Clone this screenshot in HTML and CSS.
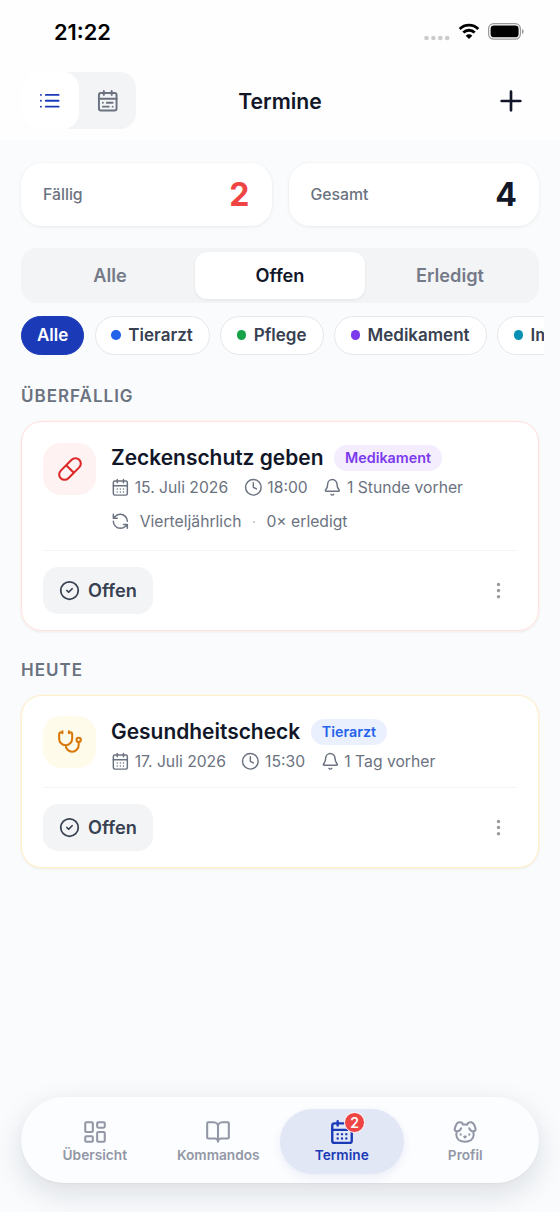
FILE: index.html
```html
<!DOCTYPE html>
<html lang="de">
<head>
<meta charset="utf-8">
<title>Termine</title>
<link rel="stylesheet" href="styles.css">
</head>
<body>
<svg class="sprite" aria-hidden="true">
  <symbol id="i-list" viewBox="0 0 24 24"><path d="M8 6h13M8 12h13M8 18h13M3 6h.01M3 12h.01M3 18h.01"/></symbol>
  <symbol id="i-range" viewBox="0 0 24 24"><rect x="3" y="4" width="18" height="18" rx="2"/><path d="M16 2v4M3 10h18M8 2v4M17 14h-6M13 18H7M7 14h.01M17 18h.01"/></symbol>
  <symbol id="i-cal" viewBox="0 0 24 24"><rect x="3" y="4" width="18" height="18" rx="2"/><path d="M16 2v4M3 10h18M8 2v4M8 14h.01M12 14h.01M16 14h.01M8 18h.01M12 18h.01M16 18h.01"/></symbol>
  <symbol id="i-clock" viewBox="0 0 24 24"><circle cx="12" cy="12" r="10"/><path d="M12 6v6l4 2"/></symbol>
  <symbol id="i-bell" viewBox="0 0 24 24"><path d="M10.268 21a2 2 0 0 0 3.464 0M3.262 15.326A1 1 0 0 0 4 17h16a1 1 0 0 0 .74-1.673C19.41 13.956 18 12.499 18 8A6 6 0 0 0 6 8c0 4.499-1.411 5.956-2.738 7.326"/></symbol>
  <symbol id="i-check" viewBox="0 0 24 24"><circle cx="12" cy="12" r="10"/><path d="m9 12 2 2 4-4"/></symbol>
  <symbol id="i-more" viewBox="0 0 24 24"><circle cx="12" cy="12" r="1"/><circle cx="12" cy="5" r="1"/><circle cx="12" cy="19" r="1"/></symbol>
</svg>

<header class="top">
  <div class="status">
    <span class="time">21:22</span>
    <span class="indicators">
      <svg class="signal" viewBox="0 0 26 6"><circle cx="2.5" cy="3" r="2.3"/><circle cx="9.4" cy="3" r="2.3"/><circle cx="16.3" cy="3" r="2.3"/><circle cx="23.2" cy="3" r="2.3"/></svg>
      <svg class="wifi" viewBox="0 0 22 16"><path class="arc" d="M1.7 5.9a13.2 13.2 0 0 1 18.6 0M5.3 9.6a8.1 8.1 0 0 1 11.4 0"/><path d="M11 16 7.7 12.7a4.7 4.7 0 0 1 6.6 0z"/></svg>
      <svg class="battery" viewBox="0 0 36 17"><rect class="shell" x=".6" y=".6" width="31.8" height="15.6" rx="5"/><rect x="2.6" y="2.5" width="28" height="11.8" rx="3.4"/><path class="nub" d="M34 6v5c1-.4 1.7-1.3 1.7-2.5S35 6.400 34 6z"/></svg>
    </span>
  </div>
  <div class="toolbar">
    <div class="views">
      <button class="view is-on"><svg class="icon"><use href="#i-list"/></svg></button>
      <button class="view"><svg class="icon"><use href="#i-range"/></svg></button>
    </div>
    <h1>Termine</h1>
    <button class="add"><svg class="icon" viewBox="0 0 24 24"><path d="M5 12h14M12 5v14"/></svg></button>
  </div>
</header>

<main>
  <section class="stats">
    <div class="stat"><span>Fällig</span><b class="due">2</b></div>
    <div class="stat"><span>Gesamt</span><b>4</b></div>
  </section>

  <div class="segments">
    <button>Alle</button><button class="is-on">Offen</button><button>Erledigt</button>
  </div>

  <div class="chips">
    <button class="chip is-on">Alle</button>
    <button class="chip vet"><i></i>Tierarzt</button>
    <button class="chip care"><i></i>Pflege</button>
    <button class="chip med"><i></i>Medikament</button>
    <button class="chip vac"><i></i>Impfung</button>
  </div>

  <h2>ÜBERFÄLLIG</h2>
  <article class="card overdue">
    <div class="info">
      <div class="tile"><svg class="icon" viewBox="0 0 24 24"><path d="m10.500 20.500 10-10a4.950 4.950 0 1 0-7-7l-10 10a4.950 4.950 0 1 0 7 7ZM8.500 8.500l7 7"/></svg></div>
      <div class="body">
        <div class="title"><h3>Zeckenschutz geben</h3><span class="tag med">Medikament</span></div>
        <div class="meta">
          <span><svg class="icon"><use href="#i-cal"/></svg>15. Juli 2026</span>
          <span><svg class="icon"><use href="#i-clock"/></svg>18:00</span>
          <span><svg class="icon"><use href="#i-bell"/></svg>1 Stunde vorher</span>
        </div>
        <div class="repeat">
          <svg class="icon" viewBox="0 0 24 24"><path d="M21 12a9 9 0 0 0-9-9 9.750 9.750 0 0 0-6.740 2.740L3 8M3 3v5h5M3 12a9 9 0 0 0 9 9 9.750 9.750 0 0 0 6.740-2.740L21 16M16 16h5v5"/></svg>
          <span>Vierteljährlich</span><span class="sep">·</span><span>0× erledigt</span>
        </div>
      </div>
    </div>
    <div class="actions">
      <button class="state"><svg class="icon"><use href="#i-check"/></svg>Offen</button>
      <button class="more"><svg class="icon"><use href="#i-more"/></svg></button>
    </div>
  </article>

  <h2 class="next">HEUTE</h2>
  <article class="card today">
    <div class="info">
      <div class="tile"><svg class="icon" viewBox="0 0 24 24"><path d="M11 2v2M5 2v2M5 3H4a2 2 0 0 0-2 2v4a6 6 0 0 0 12 0V5a2 2 0 0 0-2-2h-1M8 15a6 6 0 0 0 12 0v-3"/><circle cx="20" cy="10" r="2"/></svg></div>
      <div class="body">
        <div class="title"><h3>Gesundheitscheck</h3><span class="tag vet">Tierarzt</span></div>
        <div class="meta">
          <span><svg class="icon"><use href="#i-cal"/></svg>17. Juli 2026</span>
          <span><svg class="icon"><use href="#i-clock"/></svg>15:30</span>
          <span><svg class="icon"><use href="#i-bell"/></svg>1 Tag vorher</span>
        </div>
      </div>
    </div>
    <div class="actions">
      <button class="state"><svg class="icon"><use href="#i-check"/></svg>Offen</button>
      <button class="more"><svg class="icon"><use href="#i-more"/></svg></button>
    </div>
  </article>
</main>

<nav class="tabs">
  <a class="tab"><svg class="icon" viewBox="0 0 24 24"><rect x="3" y="3" width="7" height="9" rx="1"/><rect x="14" y="3" width="7" height="5" rx="1"/><rect x="14" y="12" width="7" height="9" rx="1"/><rect x="3" y="16" width="7" height="5" rx="1"/></svg>Übersicht</a>
  <a class="tab"><svg class="icon" viewBox="0 0 24 24"><path d="M12 7v14M3 18a1 1 0 0 1-1-1V4a1 1 0 0 1 1-1h5a4 4 0 0 1 4 4 4 4 0 0 1 4-4h5a1 1 0 0 1 1 1v13a1 1 0 0 1-1 1h-6a3 3 0 0 0-3 3 3 3 0 0 0-3-3z"/></svg>Kommandos</a>
  <a class="tab is-on"><svg class="icon"><use href="#i-cal"/></svg>Termine<span class="count">2</span></a>
  <a class="tab"><svg class="icon" viewBox="0 0 24 24"><path d="M10 5.172C10 3.782 8.423 2.679 6.500 3c-2.823.47-4.113 6.006-4 7 .08.703 1.725 1.722 3.656 1 1.261-.472 1.960-1.450 2.344-2.500M14.267 5.172c0-1.390 1.577-2.493 3.500-2.172 2.823.47 4.113 6.006 4 7-.08.703-1.725 1.722-3.656 1-1.261-.472-1.855-1.450-2.239-2.500M8 14v.5M16 14v.5M11.250 16.250h1.500L12 17l-.75-.75ZM4.420 11.247A13.152 13.152 0 0 0 4 14.556C4 18.728 7.582 21 12 21s8-2.272 8-6.444c0-1.061-.162-2.200-.493-3.309m-9.243-6.082A8.801 8.801 0 0 1 12 5c.78 0 1.500.108 2.161.306"/></svg>Profil</a>
</nav>
</body>
</html>
```

FILE: styles.css
```css
* { box-sizing: border-box; }

body {
  margin: 0;
  height: 1212px;
  display: flex;
  flex-direction: column;
  overflow: hidden;
  background: #f9fbfd;
  color: #111728;
  font-family: Inter, "Liberation Sans", sans-serif;
}

h1, h2, h3 { margin: 0; font-weight: 600; white-space: nowrap; }

button {
  margin: 0;
  padding: 0;
  border: 0;
  background: none;
  font: inherit;
  color: inherit;
}

.sprite { display: none; }

.icon {
  display: block;
  flex: none;
  fill: none;
  stroke: currentColor;
  stroke-width: 2;
  stroke-linecap: round;
  stroke-linejoin: round;
}

/* Header */
.top { flex: none; height: 140px; background: #fefefe; }

.status {
  height: 72px;
  padding: 18px 36px 0 54px;
  display: flex;
  justify-content: space-between;
}

.time { font-size: 21.800px; line-height: 28px; font-weight: 600; color: #000; }

.indicators { display: flex; gap: 8px; padding-top: 5px; }
.signal { width: 26px; height: 6px; margin-top: 11.500px; fill: #ccc; }
.wifi { width: 22px; height: 16px; }
.wifi .arc { fill: none; stroke: #000; stroke-width: 2.800; }
.battery { width: 36px; height: 17px; }
.battery .shell { fill: none; stroke: #999; stroke-width: 1.200; }
.battery .nub { fill: #999; }

.toolbar {
  display: grid;
  grid-template-columns: 1fr auto 1fr;
  align-items: center;
  height: 57px;
  padding: 0 21px;
}

.views {
  display: flex;
  width: 115px;
  height: 57px;
  border-radius: 16px;
  background: #f3f4f6;
}

.view {
  flex: 1;
  display: grid;
  place-items: center;
  border-radius: 16px;
  color: #6b7280;
}

.view.is-on { background: #fff; color: #1a3ab8; }
.view .icon { width: 23.500px; height: 23.500px; }

h1 { font-size: 21.200px; line-height: 28px; }

.add { justify-self: end; margin-right: 7px; padding: 5px; }
.add .icon { width: 32px; height: 32px; }

/* Counters and filters */
main { flex: 1; padding: 23px 21px 0; }

.stats { display: grid; grid-template-columns: 1fr 1fr; gap: 17px; }

.stat {
  height: 63px;
  padding: 0 22px;
  display: flex;
  align-items: center;
  justify-content: space-between;
  border-radius: 21px;
  background: #fff;
  box-shadow: 0 0 0 1px rgba(0, 0, 0, .012), 0 1px 4px rgba(0, 0, 0, .06);
}

.stat span { padding-bottom: 1px; font-size: 15.800px; font-weight: 500; color: #6b7280; }
.stat b { font-size: 32px; font-weight: 700; }
.stat .due { color: #ef4444; }

.segments {
  display: grid;
  grid-template-columns: 1fr 1fr 1fr;
  height: 55px;
  margin-top: 22px;
  padding: 4px;
  border-radius: 16px;
  background: #f3f4f6;
}

.segments button { padding-bottom: 1px; font-size: 18.200px; font-weight: 600; color: #757a88; border-radius: 12px; }
.segments .is-on { background: #fff; color: #111728; box-shadow: 0 1px 3px rgba(0, 0, 0, .07); }

.chips {
  display: flex;
  gap: 10.500px;
  width: 523px;
  margin-top: 13px;
  overflow: hidden;
}

.chip {
  flex: none;
  display: flex;
  align-items: center;
  height: 39px;
  padding: 0 16px 1px 15.500px;
  border: 1px solid #e5e7eb;
  border-radius: 20px;
  background: #fff;
  color: #374151;
  font-size: 17px;
  font-weight: 600;
}

.chip.is-on { padding: 0 15px 1px; background: #1a3ab8; border-color: #1a3ab8; color: #fff; }
.chip i { width: 9.500px; height: 9.500px; margin-right: 7.500px; border-radius: 50%; }
.vet i { background: #2563eb; }
.care i { background: #16a34a; }
.med i { background: #7c3aed; }
.vac i { background: #0891b2; }

h2 {
  margin-top: 29px;
  font-size: 17px;
  line-height: 24px;
  letter-spacing: 1px;
  color: #6b7280;
}

h2.next { margin-top: 27px; }

/* Appointment cards */
.card {
  margin-top: 13px;
  padding: 21px 21px 16px;
  border: 1px solid;
  border-radius: 21px;
  background: #fff;
  box-shadow: 0 0 0 .5px #fff3ea, 0 1px 3px rgba(0, 0, 0, .08);
}

.overdue { border-color: #fee2e2; }
.today { border-color: #fef0c7; }

.info { display: flex; gap: 15px; }

.tile {
  flex: none;
  width: 53px;
  height: 52px;
  display: grid;
  place-items: center;
  border-radius: 18px;
}

.tile .icon { width: 26px; height: 26px; stroke-width: 1.900; }
.overdue .tile { background: #fef2f2; color: #dc2626; }
.today .tile { margin-top: -1px; background: #fffbeb; color: #d97706; }

.title { display: flex; align-items: center; gap: 11px; height: 30px; }
h3 { font-size: 20.950px; line-height: 30px; }

.tag {
  height: 26px;
  padding: 0 10.500px;
  border-radius: 13px;
  font-size: 14.350px;
  line-height: 26px;
  font-weight: 600;
}

.tag.med { background: #f3edfe; color: #7c3aed; }
.tag.vet { background: #eaf0fe; color: #2563eb; }

.meta { display: flex; gap: 15.500px; height: 28px; }
.meta span { display: flex; align-items: center; gap: 5px; white-space: nowrap; }
.meta, .repeat { font-size: 15.700px; color: #6b7280; }
.meta .icon, .repeat .icon { width: 18.700px; height: 18.700px; stroke-width: 1.900; }

.repeat { display: flex; align-items: center; height: 40px; }
.repeat .icon { margin-right: 10px; }
.sep { width: 25px; text-align: center; color: #c3c8d0; }

.actions {
  display: flex;
  align-items: center;
  justify-content: space-between;
  padding-top: 16px;
  border-top: 1px solid #f1f3f5;
}

.overdue .actions { margin-top: 9px; }
.today .actions { margin-top: 12px; }

.state {
  display: flex;
  align-items: center;
  gap: 8px;
  height: 47px;
  padding: 0 16px 1px;
  border-radius: 15px;
  background: #f3f4f6;
  color: #374151;
  font-size: 18.200px;
  font-weight: 600;
}

.state .icon { width: 21px; height: 21px; }
.more { padding: 8px; color: #9b9b9b; }
.more .icon { width: 21px; height: 21px; }

/* Bottom navigation */
.tabs {
  flex: none;
  display: grid;
  grid-template-columns: repeat(4, 1fr);
  height: 86px;
  margin: 0 21px 29px;
  padding: 12px;
  border-radius: 43px;
  background: #fcfdfe;
  box-shadow: 0 10px 30px rgba(17, 24, 39, .13), 0 1px 2px rgba(17, 24, 39, .04);
}

.tab {
  position: relative;
  display: flex;
  flex-direction: column;
  align-items: center;
  height: 65px;
  padding-top: 10px;
  border-radius: 33px;
  color: #9297a6;
  font-size: 13.700px;
  line-height: 18px;
  font-weight: 600;
}

.tab .icon { width: 26px; height: 26px; margin-bottom: 1px; stroke-width: 1.900; }

.tab.is-on {
  background: #e2e7f6;
  color: #1a3ab8;
  box-shadow: 0 4px 10px rgba(26, 58, 184, .08);
}

.tab.is-on .icon { stroke-width: 2.200; }

/* Badge over the active icon */
.count {
  position: absolute;
  top: 3px;
  left: 64px;
  width: 21px;
  height: 21px;
  border: 1px solid #fff;
  border-radius: 50%;
  background: #ef4444;
  color: #fff;
  font-size: 14px;
  line-height: 19px;
  font-weight: 600;
  text-align: center;
}
```
